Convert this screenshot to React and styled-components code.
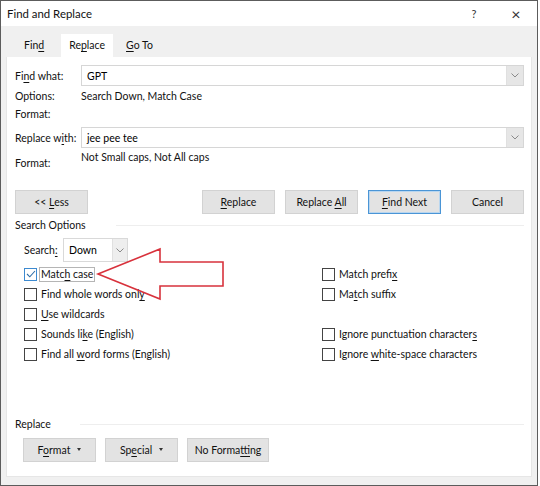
import React from "react";
import styled, { createGlobalStyle } from "styled-components";

const Global = createGlobalStyle`
  html, body { margin: 0; padding: 0; background: #ffffff; }
  * { box-sizing: border-box; }
  body { font-family: Lato, "Open Sans", sans-serif; font-size: 10.5px; color: #111111; }
`;

const Window = styled.div`
  position: relative;
  width: 538px;
  height: 486px;
  border: 1px solid #5c5c5c;
  background: #f0f0f0;
  display: flex;
  flex-direction: column;
  overflow: hidden;
`;

const TitleBar = styled.div`
  height: 25px;
  background: #ffffff;
  display: flex;
  align-items: center;
  padding: 0 0 0 6px;
  flex-shrink: 0;
`;

const Title = styled.div`
  flex: 1;
  font-size: 11.4px;
  color: #111111;
`;

const TitleButton = styled.div`
  width: 42px;
  text-align: center;
  font-size: ${(p) => (p.$big ? "16px" : "11px")};
  color: #333;
`;

const TabStrip = styled.div`
  height: 31px;
  display: flex;
  align-items: flex-end;
  padding-left: 6px;
  flex-shrink: 0;
`;

const Tab = styled.div`
  height: 23px;
  padding: 0 ${(p) => (p.$active ? "8px" : "0")};
  margin-left: ${(p) => p.$ml || 0}px;
  margin-right: ${(p) => p.$mr || 0}px;
  background: ${(p) => (p.$active ? "#ffffff" : "transparent")};
  display: flex;
  align-items: center;
  padding-bottom: 2px;
  color: #111111;
`;

const Panel = styled.div`
  margin: 0 5px;
  height: 420px;
  background: #ffffff;
  border: 1px solid #e6e6e6;
  border-top: none;
  padding: 8px 7px 0 8px;
  display: flex;
  flex-direction: column;
  flex-shrink: 0;
`;

const U = styled.span`
  text-decoration: underline;
  text-underline-offset: 2px;
`;

const FieldRow = styled.div`
  display: flex;
  align-items: ${(p) => p.$align || "center"};
  height: ${(p) => p.$h}px;
  margin-top: ${(p) => p.$mt || 0}px;
`;

const Label = styled.div`
  width: 66px;
  flex-shrink: 0;
  white-space: nowrap;
  padding-top: ${(p) => p.$pt || 0}px;
`;

const Value = styled.div`
  color: #111111;
`;

const ComboBox = styled.div`
  flex: 1;
  height: 21px;
  border: 1px solid #d6d6d6;
  display: flex;
  align-items: stretch;
  background: #fff;
`;

const ComboText = styled.div`
  flex: 1;
  padding-left: 5px;
  display: flex;
  align-items: center;
  color: #000;
`;

const ComboArrow = styled.div`
  width: ${(p) => p.$w || 17}px;
  background: ${(p) => p.$bg || "#e6e6e6"};
  border-left: 1px solid #e0e0e0;
  display: flex;
  align-items: center;
  justify-content: center;
`;

const Chevron = ({ color = "#8a8a8a" }) => (
  <svg width="8" height="5" viewBox="0 0 8 5">
    <path d="M0.5 0.5 L4 4 L7.5 0.5" fill="none" stroke={color} strokeWidth="1" />
  </svg>
);

const ButtonRow = styled.div`
  display: flex;
  align-items: center;
  gap: ${(p) => p.$gap || 10}px;
  margin-top: ${(p) => p.$mt || 0}px;
  padding-left: ${(p) => p.$pl || 0}px;
  height: 24px;
`;

const Button = styled.div`
  width: ${(p) => p.$w || 73}px;
  height: ${(p) => p.$h || 24}px;
  background: #e3e3e3;
  border: 1px solid ${(p) => (p.$default ? "#4a95d6" : "#d2d2d2")};
  box-shadow: ${(p) => (p.$default ? "inset 0 0 0 1px #b9d6ef" : "none")};
  display: flex;
  align-items: center;
  justify-content: center;
  gap: 4px;
  color: #111111;
  white-space: nowrap;
`;

const Caret = styled.span`
  display: inline-block;
  width: 0;
  height: 0;
  border-left: 2.5px solid transparent;
  border-right: 2.5px solid transparent;
  border-top: 3px solid #333;
  margin-left: 3px;
  margin-bottom: 1px;
`;

const SectionHeader = styled.div`
  display: flex;
  align-items: center;
  height: 16px;
  margin-top: ${(p) => p.$mt || 0}px;
`;

const SectionLine = styled.div`
  flex: 1;
  height: 1px;
  background: #eeeeee;
  margin-left: ${(p) => p.$ml || 28}px;
`;

const SearchRow = styled.div`
  display: flex;
  align-items: center;
  height: 24px;
  margin-top: 5px;
  padding-left: 9px;
`;

const SearchLabel = styled.div`
  width: 39px;
`;

const SmallCombo = styled.div`
  width: 65px;
  height: 24px;
  border: 1px solid #d9d9d9;
  display: flex;
  align-items: stretch;
`;

const Options = styled.div`
  display: grid;
  grid-template-columns: 298px 1fr;
  grid-auto-rows: 20px;
  padding-left: 9px;
  margin-top: 2px;
`;

const CheckItem = styled.div`
  display: flex;
  align-items: center;
  gap: 2px;
`;

const Box = styled.div`
  width: 13px;
  height: 13px;
  border: 1px solid ${(p) => (p.$checked ? "#3d8ad0" : "#444")};
  display: flex;
  align-items: center;
  justify-content: center;
  background: #fff;
  flex-shrink: 0;
`;

const CheckLabel = styled.div`
  padding: 0 1px;
  border: 1px solid ${(p) => (p.$focus ? "#b5b5b5" : "transparent")};
  line-height: 13px;
  white-space: nowrap;
`;

const Spacer = styled.div`
  flex: 1;
`;

const ArrowOverlay = styled.svg`
  position: absolute;
  left: 94px;
  top: 245px;
  pointer-events: none;
`;

const BottomGap = styled.div`
  flex: 1;
`;

const BottomPad = styled.div`
  height: 14px;
  flex-shrink: 0;
`;

const opts = [
  [{ t: <>Matc<U>h</U> case</>, checked: true, focus: true }, { t: <>Match prefi<U>x</U></> }],
  [{ t: <>Find whole words onl<U>y</U></> }, { t: <>Ma<U>t</U>ch suffix</> }],
  [{ t: <><U>U</U>se wildcards</> }, null],
  [{ t: <>Sounds li<U>k</U>e (English)</> }, { t: <>Ignore punctuation character<U>s</U></> }],
  [{ t: <>Find all <U>w</U>ord forms (English)</> }, { t: <>Ignore <U>w</U>hite-space characters</> }],
];

function Check({ item }) {
  if (!item) return <div />;
  return (
    <CheckItem>
      <Box $checked={item.checked}>
        {item.checked && (
          <svg width="10" height="8" viewBox="0 0 10 8">
            <path d="M1 4 L3.8 6.8 L9 1" fill="none" stroke="#2f6fa8" strokeWidth="1.1" />
          </svg>
        )}
      </Box>
      <CheckLabel $focus={item.focus}>{item.t}</CheckLabel>
    </CheckItem>
  );
}

export default function App() {
  return (
    <>
      <Global />
      <Window>
        <TitleBar>
          <Title>Find and Replace</Title>
          <TitleButton>?</TitleButton>
          <TitleButton $big>×</TitleButton>
        </TitleBar>
        <TabStrip>
          <Tab $ml={17} $mr={17}>Fin<U>d</U></Tab>
          <Tab $active>Re<U>p</U>lace</Tab>
          <Tab $ml={13}><U>G</U>o To</Tab>
        </TabStrip>
        <Panel>
          <FieldRow $h={21}>
            <Label>Fi<U>n</U>d what:</Label>
            <ComboBox>
              <ComboText>GPT</ComboText>
              <ComboArrow><Chevron /></ComboArrow>
            </ComboBox>
          </FieldRow>
          <FieldRow $h={18} $mt={1}>
            <Label>Options:</Label>
            <Value>Search Down, Match Case</Value>
          </FieldRow>
          <FieldRow $h={18}>
            <Label>Format:</Label>
            <Value></Value>
          </FieldRow>
          <FieldRow $h={21} $mt={4}>
            <Label>Replace w<U>i</U>th:</Label>
            <ComboBox>
              <ComboText>jee pee tee</ComboText>
              <ComboArrow><Chevron /></ComboArrow>
            </ComboBox>
          </FieldRow>
          <FieldRow $h={26} $align="flex-start" $mt={3}>
            <Label $pt={6}>Format:</Label>
            <Value>Not Small caps, Not All caps</Value>
          </FieldRow>
          <ButtonRow $mt={13}>
            <Button><span>&lt;&lt; <U>L</U>ess</span></Button>
            <Spacer />
            <Button><span><U>R</U>eplace</span></Button>
            <Button><span>Replace <U>A</U>ll</span></Button>
            <Button $default><span><U>F</U>ind Next</span></Button>
            <Button><span>Cancel</span></Button>
          </ButtonRow>
          <SectionHeader $mt={3}>
            <span>Search Options</span>
            <SectionLine $ml={30} />
          </SectionHeader>
          <SearchRow>
            <SearchLabel>Search<U>:</U></SearchLabel>
            <SmallCombo>
              <ComboText>Down</ComboText>
              <ComboArrow $w={15} $bg="#eeeeee"><Chevron /></ComboArrow>
            </SmallCombo>
          </SearchRow>
          <Options>
            {opts.map((row, i) => (
              <React.Fragment key={i}>
                <Check item={row[0]} />
                <Check item={row[1]} />
              </React.Fragment>
            ))}
          </Options>
          <BottomGap />
          <SectionHeader>
            <span>Replace</span>
            <SectionLine $ml={29} />
          </SectionHeader>
          <ButtonRow $mt={6} $gap={9} $pl={8}>
            <Button><span>F<U>o</U>rmat</span><Caret /></Button>
            <Button><span>Sp<U>e</U>cial</span><Caret /></Button>
            <Button $w={82}><span>No Forma<U>t</U>ting</span></Button>
          </ButtonRow>
          <BottomPad />
        </Panel>
        <ArrowOverlay width="132" height="56" viewBox="0 0 132 56">
          <polygon
            points="3,28 65,3 65,16 128,16 128,40 65,40 65,53"
            fill="none"
            stroke="#d8323c"
            strokeWidth="1.6"
            strokeLinejoin="miter"
          />
        </ArrowOverlay>
      </Window>
    </>
  );
}
